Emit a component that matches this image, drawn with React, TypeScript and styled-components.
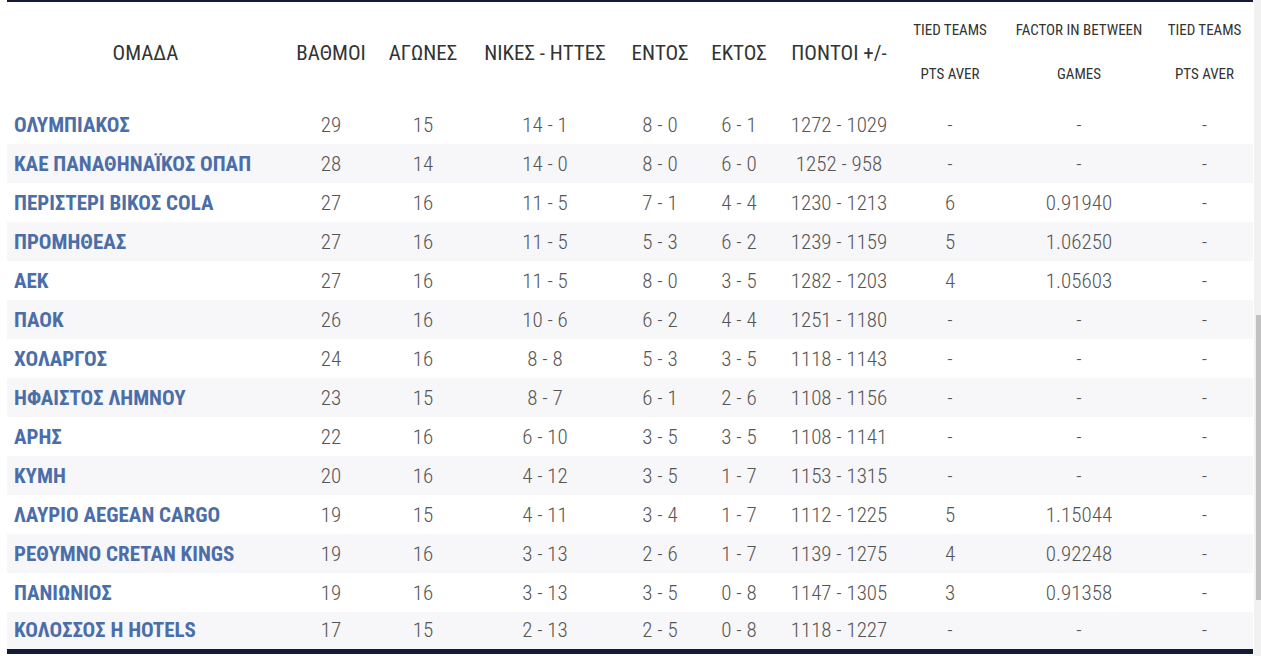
import styled, { createGlobalStyle } from 'styled-components'

const GlobalStyle = createGlobalStyle`
  html, body {
    margin: 0;
    padding: 0;
    background: #ffffff;
    overflow: hidden;
  }
  body {
    font-family: "Roboto Condensed", Roboto, "Liberation Sans", sans-serif;
  }
`

const Page = styled.div`
  display: flex;
  width: 1261px;
  height: 656px;
`

const Content = styled.div`
  flex: 1;
  padding-left: 7px;
  padding-right: 1px;
`

const Scrollbar = styled.div`
  width: 7px;
  background: #f1f1f1;
  display: flex;
  flex-direction: column;
  padding-top: 315px;
  box-sizing: border-box;
`

const Thumb = styled.div`
  width: 5px;
  margin-left: 2px;
  height: 285px;
  background: #c1c1c1;
`

const Table = styled.table`
  width: 1246px;
  border-collapse: collapse;
  border-top: 2px solid #141a3a;
  border-bottom: 5px solid #141a3a;
  table-layout: fixed;
`

const HeadCell = styled.th<{ $w: number; $small?: boolean }>`
  width: ${p => p.$w}px;
  height: 104px;
  padding: 0 0 ${p => (p.$small ? '3px' : '1px')};
  box-sizing: border-box;
  text-align: center;
  vertical-align: middle;
  font-weight: 400;
  color: #333333;
  font-size: ${p => (p.$small ? '15px' : '21px')};
  line-height: ${p => (p.$small ? '22px' : '24px')};
  white-space: nowrap;
`

const Row = styled.tr<{ $odd: boolean }>`
  height: 39px;
  background: ${p => (p.$odd ? '#f7f6f8' : '#ffffff')};
`

const TeamCell = styled.td`
  padding: 0 0 0 7px;
  font-weight: 700;
  font-size: 21px;
  color: #4b6ea9;
  white-space: nowrap;
`

const Cell = styled.td`
  padding: 0;
  text-align: center;
  font-weight: 300;
  font-size: 21px;
  color: #555555;
  white-space: nowrap;
`

const columns: { label: React.ReactNode; w: number; small?: boolean }[] = [
  { label: 'ΟΜΑΔΑ', w: 277 },
  { label: 'ΒΑΘΜΟΙ', w: 94 },
  { label: 'ΑΓΩΝΕΣ', w: 90 },
  { label: 'ΝΙΚΕΣ - ΗΤΤΕΣ', w: 154 },
  { label: 'ΕΝΤΟΣ', w: 76 },
  { label: 'ΕΚΤΟΣ', w: 82 },
  { label: 'ΠΟΝΤΟΙ +/-', w: 118 },
  { label: <>TIED TEAMS<br /><br />PTS AVER</>, w: 104, small: true },
  { label: <>FACTOR IN BETWEEN<br /><br />GAMES</>, w: 154, small: true },
  { label: <>TIED TEAMS<br /><br />PTS AVER</>, w: 97, small: true },
]

const rows = [
  ['ΟΛΥΜΠΙΑΚΟΣ', '29', '15', '14 - 1', '8 - 0', '6 - 1', '1272 - 1029', '-', '-', '-'],
  ['ΚΑΕ ΠΑΝΑΘΗΝΑΪΚΟΣ ΟΠΑΠ', '28', '14', '14 - 0', '8 - 0', '6 - 0', '1252 - 958', '-', '-', '-'],
  ['ΠΕΡΙΣΤΕΡΙ ΒΙΚΟΣ COLA', '27', '16', '11 - 5', '7 - 1', '4 - 4', '1230 - 1213', '6', '0.91940', '-'],
  ['ΠΡΟΜΗΘΕΑΣ', '27', '16', '11 - 5', '5 - 3', '6 - 2', '1239 - 1159', '5', '1.06250', '-'],
  ['ΑΕΚ', '27', '16', '11 - 5', '8 - 0', '3 - 5', '1282 - 1203', '4', '1.05603', '-'],
  ['ΠΑΟΚ', '26', '16', '10 - 6', '6 - 2', '4 - 4', '1251 - 1180', '-', '-', '-'],
  ['ΧΟΛΑΡΓΟΣ', '24', '16', '8 - 8', '5 - 3', '3 - 5', '1118 - 1143', '-', '-', '-'],
  ['ΗΦΑΙΣΤΟΣ ΛΗΜΝΟΥ', '23', '15', '8 - 7', '6 - 1', '2 - 6', '1108 - 1156', '-', '-', '-'],
  ['ΑΡΗΣ', '22', '16', '6 - 10', '3 - 5', '3 - 5', '1108 - 1141', '-', '-', '-'],
  ['ΚΥΜΗ', '20', '16', '4 - 12', '3 - 5', '1 - 7', '1153 - 1315', '-', '-', '-'],
  ['ΛΑΥΡΙΟ AEGEAN CARGO', '19', '15', '4 - 11', '3 - 4', '1 - 7', '1112 - 1225', '5', '1.15044', '-'],
  ['ΡΕΘΥΜΝΟ CRETAN KINGS', '19', '16', '3 - 13', '2 - 6', '1 - 7', '1139 - 1275', '4', '0.92248', '-'],
  ['ΠΑΝΙΩΝΙΟΣ', '19', '16', '3 - 13', '3 - 5', '0 - 8', '1147 - 1305', '3', '0.91358', '-'],
  ['ΚΟΛΟΣΣΟΣ Η HOTELS', '17', '15', '2 - 13', '2 - 5', '0 - 8', '1118 - 1227', '-', '-', '-'],
]

const App = () => {
  return (
    <Page>
      <GlobalStyle />
      <Content>
        <Table>
          <thead>
            <tr>
              {columns.map((c, i) => (
                <HeadCell key={i} $w={c.w} $small={c.small}>
                  {c.label}
                </HeadCell>
              ))}
            </tr>
          </thead>
          <tbody>
            {rows.map((r, i) => (
              <Row key={r[0]} $odd={i % 2 === 1}>
                <TeamCell>{r[0]}</TeamCell>
                {r.slice(1).map((v, j) => (
                  <Cell key={j}>{v}</Cell>
                ))}
              </Row>
            ))}
          </tbody>
        </Table>
      </Content>
      <Scrollbar>
        <Thumb />
      </Scrollbar>
    </Page>
  )
}

export default App
